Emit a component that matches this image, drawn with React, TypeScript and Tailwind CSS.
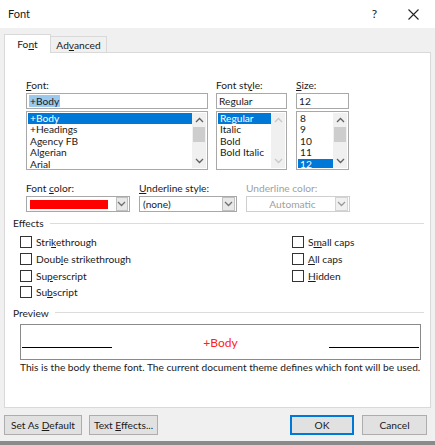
import React from 'react';

const U: React.FC<{ children: React.ReactNode }> = ({ children }) => <span className="underline underline-offset-[1px]">{children}</span>;

const ChevUp = ({ c = '#606060' }: { c?: string }) => (
    <svg width="9" height="6" viewBox="0 0 9 6"><path d="M1 5 L4.5 1.5 L8 5" fill="none" stroke={c} strokeWidth="1.3" /></svg>
);
const ChevDown = ({ c = '#606060' }: { c?: string }) => (
    <svg width="9" height="6" viewBox="0 0 9 6"><path d="M1 1 L4.5 4.5 L8 1" fill="none" stroke={c} strokeWidth="1.3" /></svg>
);

const ScrollBar = ({ disabled }: { disabled?: boolean }) => (
    <div className="w-[14px] h-full bg-[#f0f0f0] flex flex-col items-center justify-between py-[4px]">
        <ChevUp c={disabled ? '#c8c8c8' : '#606060'} />
        <div className="flex-1 w-full px-[1px] pt-[4px]">
            {!disabled && <div className="h-[15px] bg-[#cdcdcd]" />}
        </div>
        <ChevDown c={disabled ? '#c8c8c8' : '#606060'} />
    </div>
);

const ListBox = ({ items, selected, width, disabled }: { items: string[]; selected: number; width: string; disabled?: boolean }) => (
    <div className={`${width} h-[59px] border border-[#a8a8a8] bg-white flex p-[1px]`}>
        <div className="flex-1 flex flex-col overflow-hidden">
            {items.map((it, i) => (
                <div key={it} className={`h-[11.4px] leading-[11.4px] pl-[2px] shrink-0 ${i === selected ? 'bg-[#0078d7] text-white' : ''}`}>{it}</div>
            ))}
        </div>
        <ScrollBar disabled={disabled} />
    </div>
);

const DropBtn = ({ disabled }: { disabled?: boolean }) => (
    <div className={`w-[13px] h-[14px] border ${disabled ? 'border-[#d4d4d4] bg-[#f0f0f0]' : 'border-[#c0c0c0] bg-[#e8e8e8]'} flex items-center justify-center`}>
        <ChevDown c={disabled ? '#9a9a9a' : '#707070'} />
    </div>
);

const Check = ({ children }: { children: React.ReactNode }) => (
    <div className="flex items-center h-[16.7px]">
        <div className="w-[12px] h-[12px] border border-[#333] bg-white mr-[4px] shrink-0" />
        <span>{children}</span>
    </div>
);

const Legend = ({ text }: { text: string }) => (
    <div className="flex items-center">
        <span className="mr-[6px]">{text}</span>
        <div className="flex-1 h-px bg-[#dcdcdc]" />
    </div>
);

export default function App() {
    return (
        <div className="w-[435px] h-[445px] bg-white overflow-hidden text-[10.2px] leading-[12px] text-[#1a1a1a] flex flex-col" style={{ fontFamily: 'Lato, "Noto Sans", sans-serif' }}>
            {/* title bar */}
            <div className="h-[28px] flex items-center pl-[8px] pr-[16px] shrink-0">
                <span className="flex-1 text-[11px]">Font</span>
                <span className="text-[12px] mr-[31px]">?</span>
                <svg width="11" height="11" viewBox="0 0 11 11"><path d="M0.5 0.5 L10.5 10.5 M10.5 0.5 L0.5 10.5" stroke="#222" strokeWidth="1.1" /></svg>
            </div>

            <div className="flex-1 bg-[#f0f0f0] flex flex-col px-[4px]">
                {/* tabs */}
                <div className="h-[24px] flex items-end relative z-10">
                    <div className="w-[47px] h-[19px] bg-white border border-b-0 border-[#d9d9d9] flex items-center justify-center -mb-px">
                        <span>Fo<U>n</U>t</span>
                    </div>
                    <div className="w-[56px] h-[16px] bg-[#f0f0f0] border border-l-0 border-b-0 border-[#d9d9d9] flex items-center justify-center">
                        <span>Ad<U>v</U>anced</span>
                    </div>
                </div>

                {/* panel */}
                <div className="h-[356px] bg-white border border-[#d9d9d9] pl-[21px] pr-[6px]">
                    <div className="flex mt-[25px] gap-[8px]">
                        <div className="flex flex-col w-[182px]">
                            <div className="h-[14px] leading-[14px] mb-[1px]"><U>F</U>ont:</div>
                            <div className="h-[16px] border border-[#a8a8a8] flex items-center pl-[2px] mb-[2px]">
                                <span className="bg-[#99c9ef] leading-[12px] px-px">+Body</span>
                            </div>
                            <ListBox items={['+Body', '+Headings', 'Agency FB', 'Algerian', 'Arial']} selected={0} width="w-[182px]" />
                        </div>
                        <div className="flex flex-col w-[71px]">
                            <div className="h-[14px] leading-[14px] mb-[1px]">Font st<U>y</U>le:</div>
                            <div className="h-[16px] border border-[#a8a8a8] flex items-center pl-[2px] mb-[2px]">Regular</div>
                            <ListBox items={['Regular', 'Italic', 'Bold', 'Bold Italic']} selected={0} width="w-[71px]" disabled />
                        </div>
                        <div className="flex flex-col w-[53px] ml-[1px]">
                            <div className="h-[14px] leading-[14px] mb-[1px]"><U>S</U>ize:</div>
                            <div className="h-[16px] border border-[#a8a8a8] flex items-center pl-[2px] mb-[2px]">12</div>
                            <ListBox items={['8', '9', '10', '11', '12']} selected={4} width="w-[53px]" />
                        </div>
                    </div>

                    {/* color / underline */}
                    <div className="flex mt-[11px] gap-[9px]">
                        <div className="flex flex-col w-[104px]">
                            <div className="h-[14px] leading-[14px] mb-[1px]">Font <U>c</U>olor:</div>
                            <div className="h-[16px] border border-[#a8a8a8] flex items-center pl-[3px] pr-[1px] gap-[4px]">
                                <div className="w-[83px] h-[9px] bg-[#ff0000]" />
                                <div className="flex-1" />
                                <DropBtn />
                            </div>
                        </div>
                        <div className="flex flex-col w-[98px]">
                            <div className="h-[14px] leading-[14px] mb-[1px]"><U>U</U>nderline style:</div>
                            <div className="h-[16px] border border-[#a8a8a8] flex items-center pl-[3px] pr-[1px]">
                                <span className="flex-1">(none)</span>
                                <DropBtn />
                            </div>
                        </div>
                        <div className="flex flex-col w-[104px]">
                            <div className="h-[14px] leading-[14px] mb-[1px] text-[#a0a0a0]">Underline color:</div>
                            <div className="h-[16px] border border-[#cfcfcf] flex items-center pl-[3px] pr-[1px]">
                                <span className="flex-1 text-center text-[#a0a0a0]">Automatic</span>
                                <DropBtn disabled />
                            </div>
                        </div>
                    </div>

                    {/* effects */}
                    <div className="-ml-[13px] mt-[5px]">
                        <Legend text="Effects" />
                    </div>
                    <div className="flex mt-[5px] -ml-[6px]">
                        <div className="w-[272px] flex flex-col">
                            <Check>Stri<U>k</U>ethrough</Check>
                            <Check>Doub<U>l</U>e strikethrough</Check>
                            <Check>Su<U>p</U>erscript</Check>
                            <Check>Su<U>b</U>script</Check>
                        </div>
                        <div className="flex flex-col">
                            <Check>S<U>m</U>all caps</Check>
                            <Check><U>A</U>ll caps</Check>
                            <Check><U>H</U>idden</Check>
                        </div>
                    </div>

                    {/* preview */}
                    <div className="-ml-[13px] mt-[6px]">
                        <Legend text="Preview" />
                    </div>
                    <div className="-ml-[6px] mt-[5px] w-[401px] h-[36px] border border-[#8a8a8a] relative flex items-center justify-center">
                        <div className="absolute left-[1px] top-[22px] w-[90px] h-px bg-black" />
                        <div className="absolute right-[1px] top-[22px] w-[90px] h-px bg-black" />
                        <span className="text-[#ff2020] text-[12px] mt-[2px]">+Body</span>
                    </div>
                    <div className="-ml-[6px] mt-[1px] whitespace-nowrap">This is the body theme font. The current document theme defines which font will be used.</div>
                </div>

                {/* buttons */}
                <div className="flex items-center mt-[7px] h-[20px]">
                    <div className="w-[78px] h-[20px] bg-[#e1e1e1] border border-[#adadad] flex items-center justify-center"><span>Set As <U>D</U>efault</span></div>
                    <div className="w-[69px] h-[20px] bg-[#e1e1e1] border border-[#adadad] flex items-center justify-center ml-[7px]"><span>Text <U>E</U>ffects...</span></div>
                    <div className="flex-1" />
                    <div className="w-[64px] h-[20px] bg-[#e1e1e1] border-2 border-[#0078d7] flex items-center justify-center">OK</div>
                    <div className="w-[65px] h-[20px] bg-[#e1e1e1] border border-[#adadad] flex items-center justify-center ml-[8px] mr-[4px]">Cancel</div>
                </div>
                <div className="flex-1" />
                <div className="h-[4px] bg-[#8a8a8a] -mx-[4px]" />
            </div>
        </div>
    );
}
